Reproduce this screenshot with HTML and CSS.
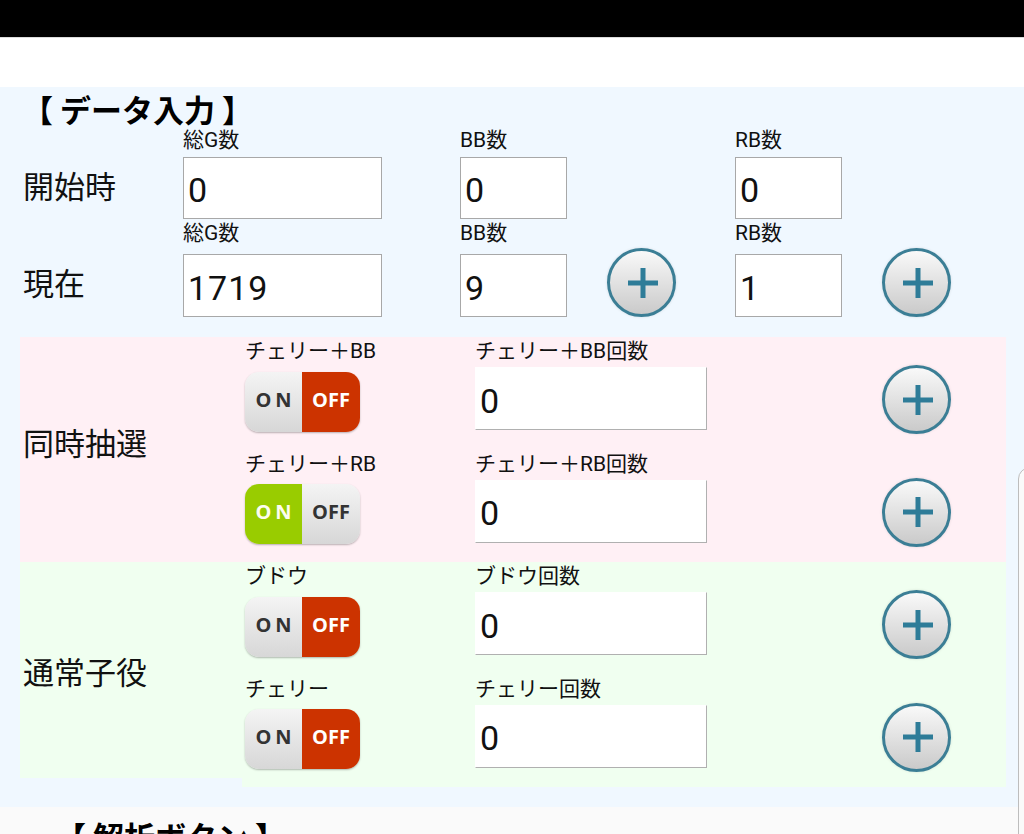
FILE: index.html
```html
<!DOCTYPE html>
<html lang="ja">
<head>
<meta charset="utf-8">
<title>データ入力</title>
<link rel="stylesheet" href="styles.css">
</head>
<body>
<div class="statusbar"></div>
<div class="topspace"></div>
<main class="panel">
  <h2 class="heading">【 データ入力 】</h2>
  <div class="base">
    <div class="flabel c2 r1">総G数</div>
    <div class="flabel c3 r1">BB数</div>
    <div class="flabel c5 r1">RB数</div>
    <div class="rlabel c1 r2">開始時</div>
    <input class="num wl c2 r2 end" type="text" value="0">
    <input class="num ws c3 r2 end" type="text" value="0">
    <input class="num ws c5 r2 end" type="text" value="0">

    <div class="flabel c2 r3">総G数</div>
    <div class="flabel c3 r3">BB数</div>
    <div class="flabel c5 r3">RB数</div>
    <div class="rlabel c1 r4">現在</div>
    <input class="num wl c2 r4 low" type="text" value="1719">
    <input class="num ws c3 r4 low" type="text" value="9">
    <button class="plus c4 r4 lowp" type="button"><svg viewBox="0 0 30 30" width="30" height="30"><path d="M15 0V30M0 15H30" stroke="#2e7c98" stroke-width="5" fill="none"/></svg></button>
    <input class="num ws c5 r4 low" type="text" value="1">
    <button class="plus c6 r4 lowp" type="button"><svg viewBox="0 0 30 30" width="30" height="30"><path d="M15 0V30M0 15H30" stroke="#2e7c98" stroke-width="5" fill="none"/></svg></button>
  </div>

  <section class="grp pink">
    <div class="grp-label">同時抽選</div>
    <div class="grp-body">
      <div class="item">
        <div class="flabel ic1">チェリー＋BB</div>
        <div class="flabel ic2">チェリー＋BB回数</div>
        <div class="tgl"><span class="seg on gray">ON</span><span class="seg off red">OFF</span></div>
        <input class="num cnt" type="text" value="0">
        <button class="plus ip" type="button"><svg viewBox="0 0 30 30" width="30" height="30"><path d="M15 0V30M0 15H30" stroke="#2e7c98" stroke-width="5" fill="none"/></svg></button>
      </div>
      <div class="item">
        <div class="flabel ic1">チェリー＋RB</div>
        <div class="flabel ic2">チェリー＋RB回数</div>
        <div class="tgl"><span class="seg on lime">ON</span><span class="seg off gray">OFF</span></div>
        <input class="num cnt" type="text" value="0">
        <button class="plus ip" type="button"><svg viewBox="0 0 30 30" width="30" height="30"><path d="M15 0V30M0 15H30" stroke="#2e7c98" stroke-width="5" fill="none"/></svg></button>
      </div>
    </div>
  </section>

  <section class="grp green">
    <div class="grp-label">通常子役</div>
    <div class="grp-body">
      <div class="item">
        <div class="flabel ic1">ブドウ</div>
        <div class="flabel ic2">ブドウ回数</div>
        <div class="tgl"><span class="seg on gray">ON</span><span class="seg off red">OFF</span></div>
        <input class="num cnt" type="text" value="0">
        <button class="plus ip" type="button"><svg viewBox="0 0 30 30" width="30" height="30"><path d="M15 0V30M0 15H30" stroke="#2e7c98" stroke-width="5" fill="none"/></svg></button>
      </div>
      <div class="item">
        <div class="flabel ic1">チェリー</div>
        <div class="flabel ic2">チェリー回数</div>
        <div class="tgl"><span class="seg on gray">ON</span><span class="seg off red">OFF</span></div>
        <input class="num cnt" type="text" value="0">
        <button class="plus ip" type="button"><svg viewBox="0 0 30 30" width="30" height="30"><path d="M15 0V30M0 15H30" stroke="#2e7c98" stroke-width="5" fill="none"/></svg></button>
      </div>
    </div>
  </section>
</main>
<section class="panel2">
  <h2 class="heading h2b">【 解析ボタン 】</h2>
</section>
<div class="edge"></div>
</body>
</html>
```

FILE: styles.css
```css
* { box-sizing: border-box; }

body {
  margin: 0;
  width: 1024px;
  height: 834px;
  overflow: hidden;
  position: relative;
  background: #fafafa;
  font-family: Roboto, "Noto Sans CJK JP", sans-serif;
  color: #111;
}

.statusbar {
  height: 38px;
  background: #000;
  border-bottom: 1px solid #dcdcdc;
}

.topspace {
  height: 49px;
  background: #fff;
}

.panel {
  background: #f0f8ff;
  padding-bottom: 20px;
}

.heading {
  margin: 0;
  padding: 4px 0 0 22px;
  font-family: "Noto Sans CJK JP", sans-serif;
  font-weight: 700;
  font-size: 31px;
  line-height: 35px;
  color: #000;
  white-space: nowrap;
}

.base {
  display: grid;
  grid-template-columns: 183px 277px 147px 128px 147px 1fr;
  grid-template-rows: 29px 64px 29px 73px;
}

.c1 { grid-column: 1; }
.c2 { grid-column: 2; }
.c3 { grid-column: 3; }
.c4 { grid-column: 4; }
.c5 { grid-column: 5; }
.c6 { grid-column: 6; }
.r1 { grid-row: 1; }
.r2 { grid-row: 2; }
.r3 { grid-row: 3; }
.r4 { grid-row: 4; }

.flabel {
  font-size: 21px;
  line-height: 29px;
  white-space: nowrap;
  color: #111;
}

.rlabel {
  font-family: "Noto Sans CJK JP", sans-serif;
  font-size: 31px;
  padding-left: 23px;
  padding-bottom: 6px;
  display: flex;
  align-items: center;
  color: #111;
}

.num {
  margin: 0;
  height: 63px;
  border: 1px solid #a8a8a8;
  background: #fff;
  padding: 4px 0 0 4px;
  font-family: Roboto, sans-serif;
  font-size: 34px;
  letter-spacing: 1px;
  color: #111;
  outline: none;
  border-radius: 0;
}

.wl { width: 199px; }
.ws { width: 107px; }

.end { align-self: end; height: 62px; }
.low { align-self: start; margin-top: 6px; }
.lowp { align-self: start; margin-top: 5px; }

.plus {
  width: 69px;
  height: 69px;
  margin: 0;
  padding: 0 0 0 2px;
  border-radius: 50%;
  border: 3px solid #3b7e95;
  background: linear-gradient(#f9f9f9, #cacaca);
  box-shadow: 0 0 3px rgba(0, 0, 0, 0.12);
  display: flex;
  align-items: center;
  justify-content: center;
}

.grp {
  display: grid;
  grid-template-columns: 222px 1fr;
  margin: 0 18px 0 20px;
}

.pink { margin-top: 16px; }

.grp-label {
  font-family: "Noto Sans CJK JP", sans-serif;
  font-size: 31px;
  padding-left: 3px;
  display: flex;
  align-items: center;
  color: #111;
}

.pink .grp-label,
.pink .grp-body { background: #fff0f5; }

.pink .grp-label { padding-bottom: 17px; }

.green .grp-label,
.green .grp-body { background: #f0fff0; }

.green .grp-label {
  height: 216px;
  align-self: start;
}

.grp-body { padding-left: 3px; }

.item {
  display: grid;
  grid-template-columns: 230px 407px 69px;
  grid-template-rows: 30px 63px;
  padding-bottom: 19.5px;
}

.ic1 { grid-column: 1; grid-row: 1; }
.ic2 { grid-column: 2; grid-row: 1; }

.cnt {
  grid-column: 2;
  grid-row: 2;
  width: 232px;
  border-color: #fff #b0b0b0 #b0b0b0 #fff;
}

.tgl {
  grid-column: 1;
  grid-row: 2;
  align-self: start;
  margin-top: 4.5px;
  width: 115px;
  height: 60px;
  border-radius: 14px;
  overflow: hidden;
  display: flex;
  box-shadow: 0 1px 2px rgba(0, 0, 0, 0.28);
}

.seg {
  display: flex;
  align-items: center;
  justify-content: center;
  font-family: "Open Sans", sans-serif;
  font-weight: 700;
  font-size: 20px;
  padding-bottom: 5px;
}

.seg.on {
  width: 57px;
  letter-spacing: 4px;
  padding-left: 4px;
}

.seg.off { width: 58px; }

.gray {
  background: linear-gradient(#f4f4f4, #d7d7d7);
  color: #333;
}

.red {
  background: #cc3300;
  color: #fff;
}

.lime {
  background: #99cc00;
  color: #fdfdf0;
}

.ip {
  grid-column: 3;
  grid-row: 2;
  align-self: start;
  margin-top: -2px;
}

.panel2 {
  background: #fafafa;
  padding-top: 7px;
  height: 100px;
}

.h2b { padding-left: 55px; }

.edge {
  position: absolute;
  left: 1018px;
  top: 467px;
  width: 30px;
  height: 420px;
  border: 1px solid #bdbdbd;
  border-radius: 12px 0 0 0;
  background: #fafafa;
}
```
